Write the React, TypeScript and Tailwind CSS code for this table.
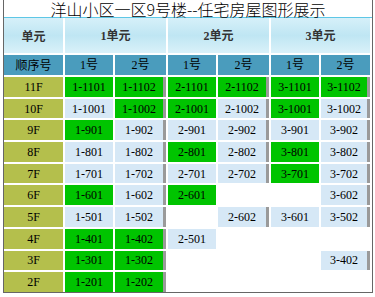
import React from 'react';

type Kind = 'g' | 'b' | null;
type Cell = [string, Kind] | null;

const FLOORS: { floor: string; cells: Cell[] }[] = [
  {
    floor: '11F',
    cells: [['1-1101', 'g'], ['1-1102', 'g'], ['2-1101', 'g'], ['2-1102', 'g'], ['3-1101', 'g'], ['3-1102', 'g']],
  },
  {
    floor: '10F',
    cells: [['1-1001', 'b'], ['1-1002', 'g'], ['2-1001', 'g'], ['2-1002', 'b'], ['3-1001', 'g'], ['3-1002', 'b']],
  },
  {
    floor: '9F',
    cells: [['1-901', 'g'], ['1-902', 'b'], ['2-901', 'b'], ['2-902', 'b'], ['3-901', 'b'], ['3-902', 'b']],
  },
  {
    floor: '8F',
    cells: [['1-801', 'b'], ['1-802', 'b'], ['2-801', 'g'], ['2-802', 'b'], ['3-801', 'g'], ['3-802', 'b']],
  },
  {
    floor: '7F',
    cells: [['1-701', 'b'], ['1-702', 'b'], ['2-701', 'b'], ['2-702', 'b'], ['3-701', 'g'], ['3-702', 'b']],
  },
  {
    floor: '6F',
    cells: [['1-601', 'g'], ['1-602', 'b'], ['2-601', 'g'], null, null, ['3-602', 'b']],
  },
  {
    floor: '5F',
    cells: [['1-501', 'b'], ['1-502', 'b'], null, ['2-602', 'b'], ['3-601', 'b'], ['3-502', 'b']],
  },
  {
    floor: '4F',
    cells: [['1-401', 'g'], ['1-402', 'g'], ['2-501', 'b'], null, null, null],
  },
  {
    floor: '3F',
    cells: [['1-301', 'g'], ['1-302', 'g'], null, null, null, ['3-402', 'b']],
  },
  {
    floor: '2F',
    cells: [['1-201', 'g'], ['1-202', 'g'], null, null, null, null],
  },
];

const SERIF = "font-['Liberation_Serif','Noto_Sans_CJK_SC',serif]";
const HEAD_BG = 'bg-gradient-to-b from-[#d6f0f9] via-[#bfe6f3] to-[#d9f1f9]';

function RoomCell({ cell, right }: { cell: Cell; right: boolean }) {
  if (!cell) {
    return <div className="h-[19.7px]" />;
  }
  const [label, kind] = cell;
  const bg = kind === 'g' ? 'bg-[#00c400]' : 'bg-[#d6e8f6]';
  return (
    <div
      className={`flex h-[19.7px] items-center justify-center text-[12px] text-black ${bg} ${
        right ? 'border-r-[3px] border-[#9a9a9a]' : ''
      }`}
    >
      {label}
    </div>
  );
}

export default function App() {
  return (
    <div className="h-[297px] w-[375px] overflow-hidden bg-white">
      <div className="ml-[3px] w-[370px] border-x border-b border-[#666]">
        <div className="flex h-[17px] items-center justify-center font-['Noto_Sans_CJK_SC',sans-serif] text-[16px] font-light leading-none text-black">
          洋山小区一区9号楼--任宅房屋图形展示
        </div>
        <div className="h-px bg-[#5ec7e6]" />
        <div className={`grid grid-cols-[59px_48px_51px_48px_51px_48px_49px] gap-[2px] ${SERIF}`}>
          <div
            className={`flex h-[35px] items-center justify-center font-['Noto_Sans_CJK_SC',sans-serif] text-[12px] font-bold text-[#333] ${HEAD_BG}`}
          >
            单元
          </div>
          {['1单元', '2单元', '3单元'].map((u) => (
            <div
              key={u}
              className={`col-span-2 flex h-[35px] items-center justify-center text-[12px] font-bold text-[#333] ${HEAD_BG}`}
            >
              {u}
            </div>
          ))}

          <div className="flex h-[20px] items-center justify-center bg-[#4a9cbd] font-['Noto_Sans_CJK_SC',sans-serif] text-[12px] text-black">
            顺序号
          </div>
          {['1号', '2号', '1号', '2号', '1号', '2号'].map((h, i) => (
            <div key={i} className="flex h-[20px] items-center justify-center bg-[#4a9cbd] text-[12px] text-black">
              {h}
            </div>
          ))}

          {FLOORS.map((r) => (
            <React.Fragment key={r.floor}>
              <div className="flex h-[19.7px] items-center justify-center bg-[#b4bf4c] text-[12px] text-black">
                {r.floor}
              </div>
              {r.cells.map((c, i) => (
                <RoomCell key={i} cell={c} right={i % 2 === 1} />
              ))}
            </React.Fragment>
          ))}
        </div>
      </div>
      <div className="mt-px pl-[30px] font-['Noto_Sans_CJK_SC',sans-serif] text-[12px] text-black">
        注：绿色表示已售房屋，浅蓝色表示未售房屋
      </div>
    </div>
  );
}
